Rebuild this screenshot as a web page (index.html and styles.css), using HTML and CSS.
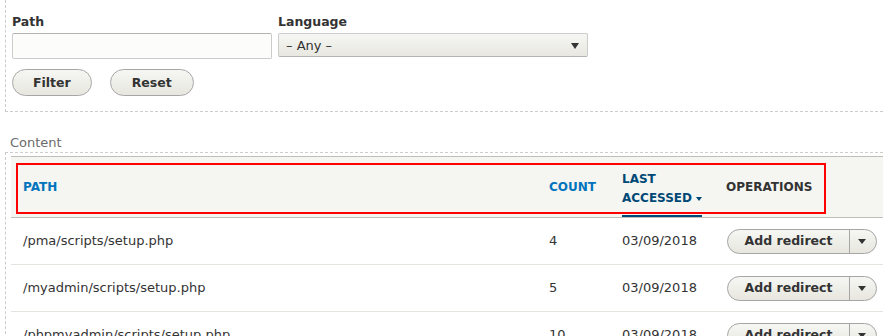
FILE: index.html
```html
<!DOCTYPE html>
<html lang="en">
<head>
    <meta charset="UTF-8">
    <title>Top 404 errors</title>
    <link rel="stylesheet" href="styles.css">
</head>
<body>
    <form class="filters">
        <div class="filter-fields">
            <div class="field">
                <label for="path">Path</label>
                <input type="text" id="path" class="text-input">
            </div>
            <div class="field">
                <label for="langcode">Language</label>
                <div class="select-wrap">
                    <select id="langcode" class="select">
                        <option>&ndash; Any &ndash;</option>
                    </select>
                    <span class="select-arrow"></span>
                </div>
            </div>
        </div>
        <div class="actions">
            <button type="submit" class="button">Filter</button>
            <button type="button" class="button">Reset</button>
        </div>
    </form>

    <div class="legend">Content</div>
    <div class="content">
        <table class="logs">
            <thead>
                <tr>
                    <th class="col-path"><a href="#">Path</a></th>
                    <th class="col-count"><a href="#">Count</a></th>
                    <th class="col-date is-active"><a href="#">Last<br>accessed<span class="sort-arrow"></span></a></th>
                    <th class="col-ops">Operations</th>
                </tr>
            </thead>
            <tbody>
                <tr>
                    <td>/pma/scripts/setup.php</td>
                    <td>4</td>
                    <td>03/09/2018</td>
                    <td>
                        <div class="dropbutton">
                            <a href="#" class="dropbutton-main">Add redirect</a>
                            <span class="dropbutton-toggle"><span class="toggle-arrow"></span></span>
                        </div>
                    </td>
                </tr>
                <tr>
                    <td>/myadmin/scripts/setup.php</td>
                    <td>5</td>
                    <td>03/09/2018</td>
                    <td>
                        <div class="dropbutton">
                            <a href="#" class="dropbutton-main">Add redirect</a>
                            <span class="dropbutton-toggle"><span class="toggle-arrow"></span></span>
                        </div>
                    </td>
                </tr>
                <tr>
                    <td>/phpmyadmin/scripts/setup.php</td>
                    <td>10</td>
                    <td>03/09/2018</td>
                    <td>
                        <div class="dropbutton">
                            <a href="#" class="dropbutton-main">Add redirect</a>
                            <span class="dropbutton-toggle"><span class="toggle-arrow"></span></span>
                        </div>
                    </td>
                </tr>
            </tbody>
        </table>
        <div class="highlight"></div>
    </div>
</body>
</html>
```

FILE: styles.css
```css
body {
    margin: 0;
    font-family: 'DejaVu Sans', Verdana, sans-serif;
    font-size: 13px;
    color: #333;
    background-color: #ffffff;
    overflow: hidden;
}

.filters {
    margin: 0 0 0 5px;
    padding: 14px 0 15px 6px;
    border-left: 1px dashed #ccc;
    border-bottom: 1px dashed #ccc;
}

.filter-fields {
    display: flex;
    gap: 6px;
}

.field label {
    display: block;
    font-weight: bold;
    font-size: 12.5px;
    line-height: 16px;
    margin-bottom: 3px;
}

.text-input {
    display: block;
    width: 260px;
    height: 26px;
    margin: 0;
    padding: 2px 6px;
    box-sizing: border-box;
    border: 1px solid #ccc;
    border-top-color: #b3b3b3;
    border-radius: 2px;
    background-color: #fcfcfa;
    font: inherit;
}

.select-wrap {
    position: relative;
    width: 310px;
}

.select {
    display: block;
    width: 310px;
    height: 24px;
    margin: 0;
    padding: 0 0 0 7px;
    appearance: none;
    -webkit-appearance: none;
    border: 1px solid #ccc;
    border-bottom-color: #b3b3b3;
    border-radius: 2px;
    background: linear-gradient(#f6f6f3, #e8e8e1);
    font-family: inherit;
    font-size: 13px;
    color: #333;
}

.select-arrow {
    position: absolute;
    right: 9px;
    top: 10px;
    border-left: 4px solid transparent;
    border-right: 4px solid transparent;
    border-top: 6px solid #333;
}

.actions {
    display: flex;
    gap: 18px;
    margin-top: 10px;
}

.button {
    height: 27px;
    padding: 0 20px;
    border: 1px solid #a6a6a6;
    border-radius: 20px;
    background: linear-gradient(#f6f6f3, #e7e7df);
    font-family: inherit;
    font-size: 12.5px;
    font-weight: bold;
    color: #333;
}

.button + .button {
    padding: 0 21px;
}

.legend {
    margin: 22px 0 0 10px;
    line-height: 18px;
    color: #6b6b6b;
}

.content {
    position: relative;
    margin: 0 0 0 5px;
    padding: 3px 0 0 5px;
    border-top: 1px dashed #ccc;
    border-left: 1px dashed #ccc;
}

.logs {
    width: 890px;
    border-collapse: collapse;
    border-top: 1px solid #bfbfba;
}

.logs th {
    height: 60px;
    padding: 0 12px;
    background-color: #f5f5f2;
    border-bottom: 1px solid #bfbfba;
    text-align: left;
    text-transform: uppercase;
    font-size: 12px;
    font-weight: bold;
    line-height: 19px;
    color: #333;
}

.logs th a {
    color: #0074bd;
    text-decoration: none;
}

.logs th.is-active {
    vertical-align: bottom;
}

.logs th.is-active a {
    display: inline-block;
    padding-bottom: 7px;
    border-bottom: 2px solid #004875;
    white-space: nowrap;
    color: #004875;
}

.sort-arrow {
    display: inline-block;
    vertical-align: middle;
    margin-left: 4px;
    border-left: 3px solid transparent;
    border-right: 3px solid transparent;
    border-top: 4px solid #004875;
}

.col-path {
    width: 502px;
}

.col-count {
    width: 49px;
}

.col-date {
    width: 79px;
}

.logs td {
    height: 46px;
    padding: 0 12px;
    border-bottom: 1px solid #e6e4df;
    line-height: 16px;
}

.logs td:last-child {
    padding-left: 13px;
}

.dropbutton {
    display: flex;
    width: 150px;
    height: 25px;
    box-sizing: border-box;
    border: 1px solid #a6a6a6;
    border-radius: 20px;
    background: linear-gradient(#f6f6f3, #e7e7df);
    overflow: hidden;
}

.dropbutton-main {
    flex: 1;
    display: flex;
    align-items: center;
    justify-content: center;
    border-right: 1px solid #a6a6a6;
    font-weight: bold;
    font-size: 12.5px;
    color: #333;
    text-decoration: none;
}

.dropbutton-toggle {
    width: 26px;
    display: flex;
    align-items: center;
    justify-content: center;
}

.toggle-arrow {
    margin-left: -2px;
    border-left: 4px solid transparent;
    border-right: 4px solid transparent;
    border-top: 5px solid #333;
}

.highlight {
    position: absolute;
    left: 10px;
    top: 10px;
    width: 806px;
    height: 47px;
    border: 2px solid #ff0000;
}
```
